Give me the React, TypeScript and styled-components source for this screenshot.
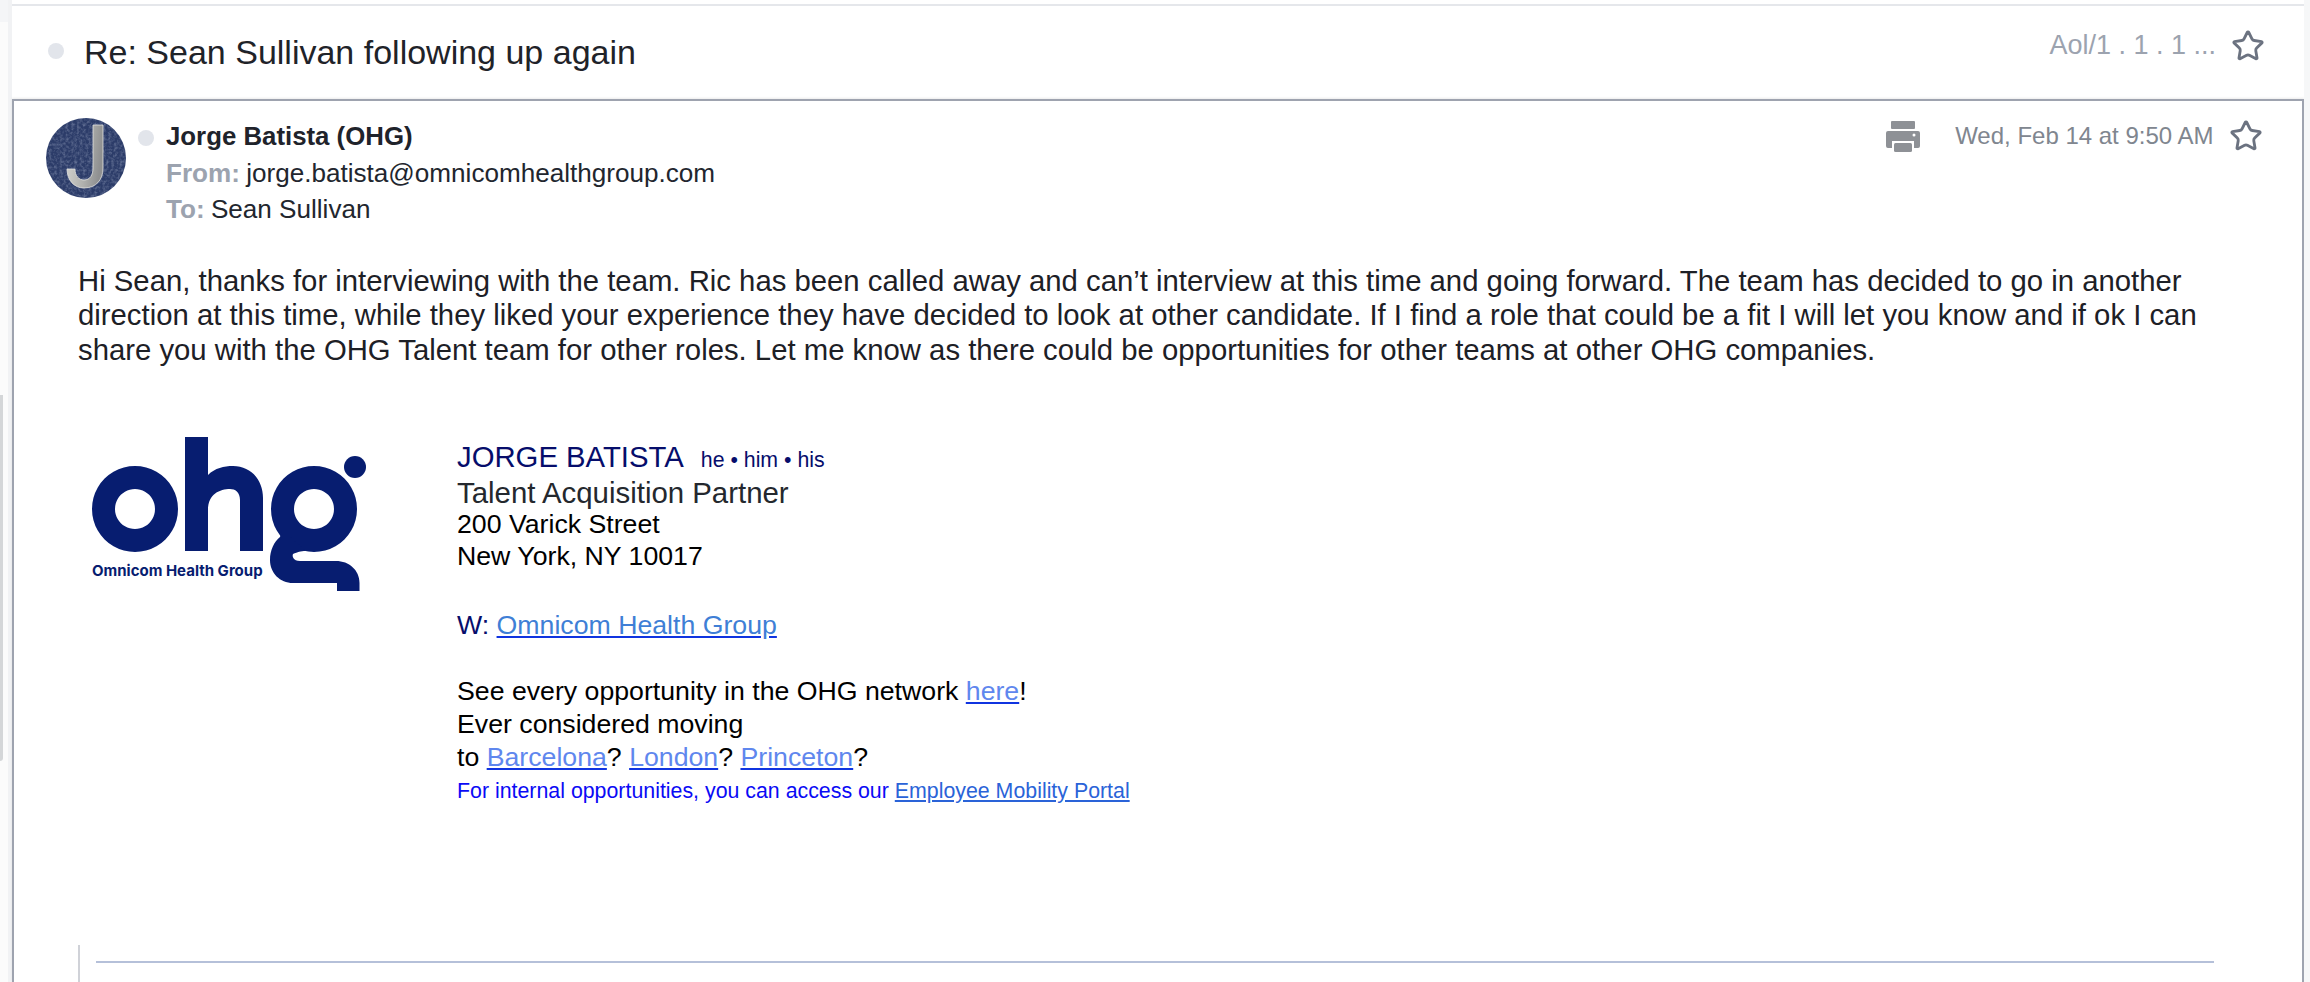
import React from 'react';
import styled, { createGlobalStyle } from 'styled-components';
import { Star } from 'lucide-react';

const Global = createGlobalStyle`
  html, body { margin: 0; padding: 0; background: #fff; }
  body { font-family: "Liberation Sans", Arial, sans-serif; overflow: hidden; }
`;

const Page = styled.div`
  width: 2310px;
  height: 982px;
  display: flex;
  overflow: hidden;
  background: #fff;
`;
const Gutter = styled.div`
  width: 12px;
  flex: none;
  display: flex;
`;
const GutterPane = styled.div`
  width: 8px;
  display: flex;
  flex-direction: column;
  background: #fbfbfb;
`;
const GutterTop = styled.div`
  height: 22px;
  flex: none;
  background: #f4f5f7;
  margin-bottom: 373px;
`;
const GutterThumb = styled.div`
  width: 3px;
  height: 366px;
  background: #d4d6d8;
  border-radius: 0 0 3px 0;
`;
const GutterEdge = styled.div`
  width: 4px;
  background: #f1f2f4;
`;
const RightGutter = styled.div`
  width: 6px;
  flex: none;
  background: #f6f7f8;
`;
const Thread = styled.div`
  flex: 1;
  min-width: 0;
  display: flex;
  flex-direction: column;
`;
const Subject = styled.header`
  height: 93px;
  margin-top: 4px;
  border-top: 2px solid #e5e7eb;
  display: flex;
  align-items: center;
  padding: 0 39px 0 36px;
`;
const Dot = styled.span`
  width: 16px;
  height: 16px;
  border-radius: 50%;
  background: #e2e5eb;
  flex: none;
`;
const SubjectDot = styled(Dot)`
  margin-right: 20px;
  margin-top: -4px;
`;
const SubjectTitle = styled.h1`
  flex: 1;
  margin: -1px 0 0;
  font-size: 34px;
  font-weight: 400;
  color: #1f2329;
  line-height: 40px;
`;
const Tags = styled.span`
  font-size: 27px;
  color: #9ca3af;
  margin-right: 15px;
  margin-top: -14px;
`;
const StarIcon = styled(Star)`
  flex: none;
  color: #6b7280;
  width: 34px;
  height: 34px;
`;
const HeaderStar = styled(StarIcon)`
  margin-top: -13px;
`;
const Message = styled.article`
  flex: 1;
  border: 2px solid #9ea3af;
  border-bottom: none;
  box-shadow: 0 -1px 2px rgba(0, 0, 0, 0.08);
  padding: 17px 0 0 32px;
  display: flex;
  flex-direction: column;
`;
const MessageHead = styled.div`
  display: flex;
  align-items: flex-start;
`;
const Avatar = styled.svg`
  width: 80px;
  height: 80px;
  flex: none;
`;
const SenderDot = styled(Dot)`
  margin: 12px 12px 0 12px;
`;
const Sender = styled.div`
  flex: 1;
  font-size: 26.1px;
  line-height: 36px;
  color: #22262e;
`;
const SenderName = styled.div`
  font-weight: 700;
  font-size: 25.8px;
  color: #1f232b;
`;
const FromLine = styled.div`
  margin-top: 1px;
`;
const Label = styled.b`
  color: #9ca3af;
  font-weight: 700;
  margin-right: -1px;
`;
const Actions = styled.div`
  display: flex;
  align-items: center;
  padding-right: 39px;
  margin-top: 1px;
`;
const Printer = styled.svg`
  width: 34px;
  height: 32px;
  margin-right: 35px;
  flex: none;
`;
const DateText = styled.span`
  font-size: 24px;
  color: #80868f;
  margin-right: 15.5px;
`;
const Body = styled.p`
  margin: 36.5px 60px 0 32px;
  font-size: 29.3px;
  line-height: 34.8px;
  color: #1d2026;
`;
const Signature = styled.div`
  display: flex;
  margin: 52px 0 0 16px;
`;
const Logo = styled.svg`
  width: 340px;
  height: 190px;
  flex: none;
  margin-left: -2px;
`;
const SigText = styled.div`
  margin-left: 57px;
  margin-top: 20px;
  font-size: 26.7px;
  line-height: 32px;
  color: #000;
`;
const SigName = styled.div`
  font-size: 29.3px;
  line-height: 33px;
  color: #060d6b;
`;
const Pronouns = styled.span`
  font-size: 21.3px;
  margin-left: 17px;
`;
const SigRole = styled.div`
  font-size: 29.4px;
  line-height: 31px;
  color: #24282e;
`;
const Spacer = styled.div<{ $h: number }>`
  height: ${p => p.$h}px;
`;
const Web = styled.div`
  color: #060d6b;
  line-height: 33px;
`;
const WebLink = styled.a`
  color: #3f7fd6;
  text-decoration: underline;
  text-decoration-color: #1034e0;
`;
const PaleLink = styled.a`
  color: #5f87ee;
  text-decoration: underline;
  text-decoration-color: #1034e0;
`;
const Moves = styled.div`
  line-height: 33px;
`;
const Internal = styled.div`
  font-size: 21.35px;
  line-height: 34px;
  color: #0a0af5;
`;
const InternalLink = styled.a`
  color: #2a63d8;
  text-decoration: underline;
`;
const Quote = styled.div`
  margin: 137px 0 0 32px;
  padding: 16px 88px 0 16px;
  border-left: 2px solid #d0d2d8;
  flex: 1;
`;
const Rule = styled.hr`
  margin: 0;
  border: none;
  height: 2px;
  background: #b5c0d9;
`;

export default function App() {
  return (
    <Page>
      <Global />
      <Gutter>
        <GutterPane>
          <GutterTop />
          <GutterThumb />
        </GutterPane>
        <GutterEdge />
      </Gutter>
      <Thread>
        <Subject>
          <SubjectDot />
          <SubjectTitle>Re: Sean Sullivan following up again</SubjectTitle>
          <Tags>Aol/1 . 1 . 1 ...</Tags>
          <HeaderStar strokeWidth={2} />
        </Subject>
        <Message>
          <MessageHead>
            <Avatar viewBox="0 0 80 80">
              <defs>
                <clipPath id="av"><circle cx="40" cy="40" r="40" /></clipPath>
                <filter id="leather" x="0" y="0" width="100%" height="100%">
                  <feTurbulence type="fractalNoise" baseFrequency="0.35" numOctaves="3" seed="4" />
                  <feColorMatrix values="0 0 0 0 0.62  0 0 0 0 0.68  0 0 0 0 0.82  0 0 0 1.3 -0.5" />
                </filter>
                <linearGradient id="silver" x1="0" y1="0" x2="1" y2="0.2">
                  <stop offset="0" stopColor="#d6d6d2" />
                  <stop offset="0.6" stopColor="#b0b1ae" />
                  <stop offset="1" stopColor="#8f9091" />
                </linearGradient>
              </defs>
              <g clipPath="url(#av)">
                <rect width="80" height="80" fill="#2c3c69" />
                <rect width="80" height="80" filter="url(#leather)" opacity="0.5" />
                <path d="M47 7 H57 V50 C57 62 50 70 38 70 C28 70 21 62 21 51 H29 C29 58 33 62 38 62 C44 62 47 57 47 50 Z" fill="url(#silver)" stroke="#e4e4e2" strokeWidth="0.8" />
              </g>
            </Avatar>
            <SenderDot />
            <Sender>
              <SenderName>Jorge Batista (OHG)</SenderName>
              <FromLine><Label>From:</Label> jorge.batista@omnicomhealthgroup.com</FromLine>
              <div><Label>To:</Label> Sean Sullivan</div>
            </Sender>
            <Actions>
              <Printer viewBox="0 0 34 32">
                <rect x="5" y="1" width="24" height="8" rx="1" fill="#8e9196" />
                <path d="M2 11 H32 A2 2 0 0 1 34 13 V26 A2 2 0 0 1 32 28 H28 V21 H6 V28 H2 A2 2 0 0 1 0 26 V13 A2 2 0 0 1 2 11 Z" fill="#8e9196" />
                <circle cx="28" cy="15" r="1.5" fill="#fff" />
                <rect x="8" y="23" width="18" height="9" rx="1.5" fill="#8e9196" />
              </Printer>
              <DateText>Wed, Feb 14 at 9:50 AM</DateText>
              <StarIcon strokeWidth={2} />
            </Actions>
          </MessageHead>
          <Body>
            Hi Sean, thanks for interviewing with the team. Ric has been called away and can’t interview at this time and going forward. The team has decided to go in another direction at this time, while they liked your experience they have decided to look at other candidate. If I find a role that could be a fit I will let you know and if ok I can share you with the OHG Talent team for other roles. Let me know as there could be opportunities for other teams at other OHG companies.
          </Body>
          <Signature>
            <Logo viewBox="0 0 340 190">
              <g fill="#071d70">
                <path fillRule="evenodd" d="M75 46 a43 43 0 1 0 0.01 0 Z M75 69 a20 20 0 1 1 -0.01 0 Z" />
                <path d="M125 17 H148 V55 C155 48 164 46 173 46 C191 46 203 60 203 78 V131 H180 V80 C180 72 175 69 170 69 C160 69 148 74 148 90 V131 H125 Z" />
                <path fillRule="evenodd" d="M254 46 a43 43 0 1 0 0.01 0 Z M254 69 a20 20 0 1 1 -0.01 0 Z" />
                <circle cx="295" cy="47" r="11" />
                <path d="M220 117 C214 122 210 130 210 140 C210 153 220 163 233 163 H277 V171 H299.5 V163 C299.5 150 289 141 276 141 H240 C233 141 232 136 233 134 C238 132 240 131 246 131 L222 110 Z" />
                <text x="32" y="156" fontFamily="Inter, Liberation Sans, sans-serif" fontWeight="700" fontSize="15">Omnicom Health Group</text>
              </g>
            </Logo>
            <SigText>
              <SigName>JORGE BATISTA<Pronouns>he • him • his</Pronouns></SigName>
              <SigRole>Talent Acquisition Partner</SigRole>
              <div>200 Varick Street</div>
              <div>New York, NY 10017</div>
              <Spacer $h={37} />
              <Web>W: <WebLink>Omnicom Health Group</WebLink></Web>
              <Spacer $h={33} />
              <Moves>See every opportunity in the OHG network <PaleLink>here</PaleLink>!</Moves>
              <Moves>Ever considered moving</Moves>
              <Moves>to <PaleLink>Barcelona</PaleLink>? <PaleLink>London</PaleLink>? <PaleLink>Princeton</PaleLink>?</Moves>
              <Internal>For internal opportunities, you can access our <InternalLink>Employee Mobility Portal</InternalLink></Internal>
            </SigText>
          </Signature>
          <Quote><Rule /></Quote>
        </Message>
      </Thread>
      <RightGutter />
    </Page>
  );
}
